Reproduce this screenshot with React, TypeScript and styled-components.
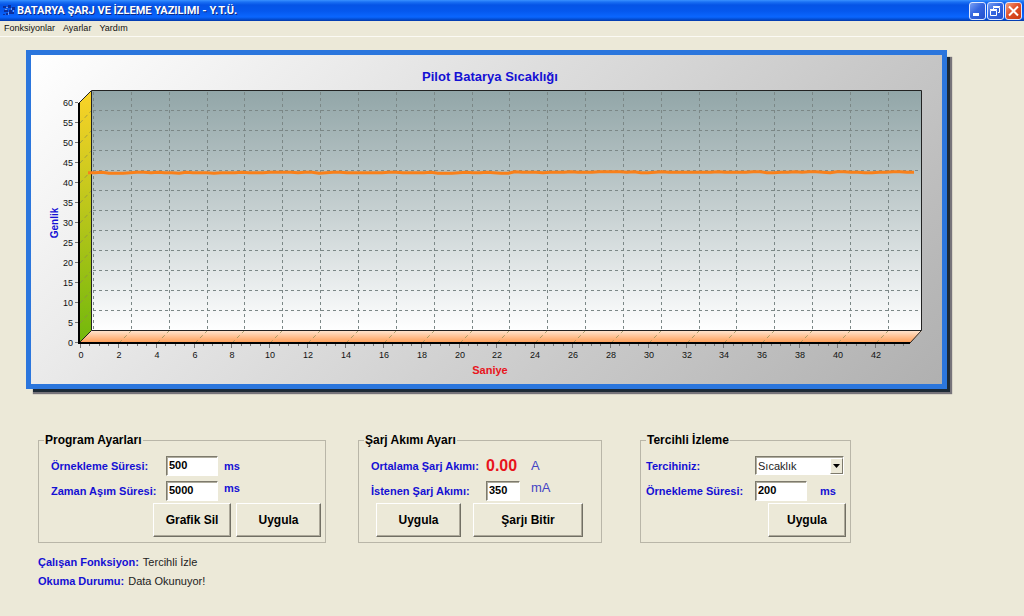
import React from "react";
import styled, { createGlobalStyle, css } from "styled-components";

const SANS = `"Liberation Sans", Arial, sans-serif`;
const FACE = "#ece9d8";
const BLUE = "#1410d4";

const GlobalStyle = createGlobalStyle`
  * { box-sizing: border-box; }
  body {
    margin: 0;
    background: ${FACE};
    color: #000;
    font-family: ${SANS};
    font-size: 11px;
  }
`;

const TitleBar = styled.header`
  display: flex;
  align-items: center;
  height: 21px;
  padding: 0 2px;
  background: linear-gradient(#3a92ff 0, #1a70f4 2px, #0554e6 5px, #0558ee 11px, #0a66ff 17px, #0450d8 19px, #0338a8 21px);
`;

const TitleText = styled.h1`
  flex: 1;
  margin: 0 0 0 1px;
  color: #fff;
  font: 700 11px/20px Roboto, sans-serif;
  text-shadow: 1px 1px 0 #0a2a86;
  white-space: nowrap;
`;

const WindowButtons = styled.div`
  display: flex;
  gap: 1px;
`;

const WindowButton = styled.button<{ $close?: boolean }>`
  display: grid;
  place-items: center;
  width: 17px;
  height: 18px;
  padding: 0;
  border: 1px solid #dfe8ff;
  border-radius: 3px;
  background: ${(p) =>
    p.$close
      ? "linear-gradient(135deg, #f0a080, #e0502a 45%, #c8380f)"
      : "linear-gradient(135deg, #7aa0f4, #3566e0 45%, #2450cc)"};
`;

const MenuBar = styled.nav`
  display: flex;
  gap: 8px;
  height: 16px;
  padding: 0 4px;
  border-bottom: 1px solid #fbfaf4;
`;

const MenuLink = styled.a`
  color: #111;
  font: 9px/15px ${SANS};
  text-decoration: none;
`;

const ChartPanel = styled.section`
  margin: 13px 77px 0 26px;
  border: 5px solid #2b76dd;
  background: linear-gradient(135deg, #fff, #b0b0b0);
  box-shadow: 5px 5px 0 -2px #1d2a36, 6px 6px 1px -1px #77747a;
`;

const ChartSvg = styled.svg`
  display: block;
  width: 100%;
  height: auto;
  font-family: ${SANS};
`;

const Groups = styled.div`
  display: grid;
  grid-template-columns: 288fr 250fr 211fr;
  column-gap: 32px;
  margin: 44px 173px 0 38px;
`;

const Group = styled.fieldset<{ $indent: number; $end: number; $after?: number }>`
  min-width: 0;
  margin: 0 ${(p) => p.$after ?? 0}px 0 0;
  padding: 6px ${(p) => p.$end}px 5px ${(p) => p.$indent}px;
  border: 1px solid #b9b6a8;
`;

const Legend = styled.legend<{ $indent: number }>`
  margin-left: ${(p) => 5 - p.$indent}px;
  padding: 0 1px;
  font-size: 12px;
  font-weight: 700;
  line-height: 14px;
`;

const Fields = styled.div<{ $columns: string }>`
  display: grid;
  grid-template-columns: ${(p) => p.$columns};
  grid-auto-rows: 25px;
  align-items: center;
  white-space: nowrap;
`;

const blueBold = css`
  color: ${BLUE};
  font-size: 11px;
  font-weight: 700;
`;

const Label = styled.label`
  ${blueBold}
`;

const Unit = styled.span<{ $raised?: boolean }>`
  ${blueBold}
  line-height: 20px;
  align-self: ${(p) => (p.$raised ? "start" : "center")};
`;

const LightUnit = styled(Unit)`
  color: #4444c4;
  font-size: 13px;
  font-weight: 400;
`;

const sunken = css`
  border: 1px solid;
  border-color: #7d7a6c #fff #fff #7d7a6c;
  background: #fff;
  box-shadow: inset 1px 1px 0 #b0ad9f;
`;

const TextBox = styled.input<{ $width: number }>`
  ${sunken}
  width: ${(p) => p.$width}px;
  height: 20px;
  padding: 0 2px 2px;
  color: #000;
  font: 700 11px ${SANS};
`;

const Reading = styled.output`
  color: #e8141c;
  font-size: 16px;
  font-weight: 700;
`;

const SelectBox = styled.div`
  ${sunken}
  position: relative;
  grid-column: 2 / 4;
  width: 89px;
  height: 19px;
`;

const Select = styled.select`
  display: block;
  width: 100%;
  height: 100%;
  padding: 0 2px;
  border: 0;
  appearance: none;
  background: transparent;
  color: #222;
  font: 11px ${SANS};
`;

const SelectArrow = styled.span`
  position: absolute;
  top: 1px;
  right: 0;
  bottom: 0;
  display: grid;
  place-items: center;
  width: 13px;
  border: 1px solid;
  border-color: #fff #7d7a6c #7d7a6c #fff;
  background: ${FACE};
  pointer-events: none;
`;

const Actions = styled.div<{ $gap: number }>`
  display: flex;
  justify-content: flex-end;
  gap: ${(p) => p.$gap}px;
`;

const PushButton = styled.button<{ $width: number }>`
  width: ${(p) => p.$width}px;
  height: 34px;
  padding: 0;
  border: 1px solid;
  border-color: #fff #716f64 #716f64 #fff;
  background: ${FACE};
  box-shadow: inset -1px -1px 0 #aca899;
  color: #000;
  font: 700 12px ${SANS};
`;

const Status = styled.dl`
  margin: 10px 38px 0;
`;

const StatusRow = styled.div`
  display: flex;
  gap: 4px;
  line-height: 19px;
`;

const StatusName = styled.dt`
  ${blueBold}
`;

const StatusValue = styled.dd`
  margin: 0;
  color: #222;
  font-size: 11px;
`;

const LEFT = 48;
const FLOOR = 288;
const TOP = 48;
const RIGHT = 879;
const DEPTH_X = 13;
const DEPTH_Y = 12;
const X0 = 50;
const X_STEP = 37.85;

const yTicks = Array.from({ length: 13 }, (_, i) => i * 5);
const xTicks = Array.from({ length: 22 }, (_, i) => i * 2);
const minorTicks = Array.from({ length: 88 }, (_, i) => i);
const yAt = (v: number) => FLOOR - v * 4;
const xAt = (v: number) => Math.round(X0 + (v / 2) * X_STEP);

const samples = [0, 0, 0, -1, 0, 1, 0, 0, -1, -1, -1, 0, 1, 0, -1, 0, 1, 0, -1, 0, 0, 1, 0, 0, -1, 0, -1, -1, 0, 0, 1, 0, -1, -1, 0];
const trace = Array.from({ length: 119 }, (_, i) => {
  const drift = i > 60 ? -0.6 : 0;
  const noise = samples[(i * 3 + (i % 4)) % samples.length] * 0.5;
  return `${57 + i * 7},${(117.8 + drift + noise).toFixed(1)}`;
}).join(" ");

function Chart() {
  return (
    <ChartSvg viewBox="0 0 911 329" role="img" aria-label="Pilot Batarya Sıcaklığı">
      <defs>
        <linearGradient id="back" x1="0" y1="0" x2="0" y2="1">
          <stop offset="0" stopColor="#92a6a8" />
          <stop offset="0.5" stopColor="#c6d0d1" />
          <stop offset="1" stopColor="#ffffff" />
        </linearGradient>
        <linearGradient id="wall" x1="0" y1="0" x2="0" y2="1">
          <stop offset="0" stopColor="#fbd328" />
          <stop offset="1" stopColor="#72b80c" />
        </linearGradient>
        <linearGradient id="floor" x1="0" y1="0" x2="0" y2="1">
          <stop offset="0" stopColor="#ffe3cc" />
          <stop offset="1" stopColor="#ff9a50" />
        </linearGradient>
      </defs>

      <text x="459" y="26" textAnchor="middle" fontSize="13" fontWeight="700" fill={BLUE}>
        Pilot Batarya Sıcaklığı
      </text>

      <rect x={LEFT + DEPTH_X - 1} y={TOP - DEPTH_Y} width={RIGHT - LEFT} height={FLOOR - TOP} fill="url(#back)" />
      <polygon points="48,48 60,36 60,276 48,288" fill="url(#wall)" />
      <polygon points="48,288 60,276 891,276 879,288" fill="url(#floor)" />

      <g stroke="#7b8786" strokeDasharray="3 3" shapeRendering="crispEdges">
        {yTicks.slice(1, -1).map((v) => (
          <line key={v} x1="62" x2="890" y1={yAt(v) - DEPTH_Y - 0.5} y2={yAt(v) - DEPTH_Y - 0.5} />
        ))}
        {xTicks.map((v) => (
          <line key={v} x1={xAt(v) + 12.5} x2={xAt(v) + 12.5} y1="37" y2="276" />
        ))}
      </g>
      <g stroke="#8c8a50" strokeOpacity="0.7" strokeDasharray="4 3">
        {yTicks.slice(1, -1).map((v) => (
          <line key={v} x1="49" y1={yAt(v)} x2="60" y2={yAt(v) - DEPTH_Y} />
        ))}
        {xTicks.slice(1).map((v) => (
          <line key={v} x1={xAt(v)} y1={FLOOR} x2={xAt(v) + 12} y2={FLOOR - DEPTH_Y} />
        ))}
      </g>

      <g fill="none" stroke="#222">
        <path d="M60.500 36V275.500H890.500V35.500H60.500L48 48M60.500 275.500L48 288M890.500 275.500L879 288" />
        <path d="M48 48V288H879" strokeWidth="2" stroke="#000" />
      </g>

      <g stroke="#777" shapeRendering="crispEdges">
        {yTicks.map((v) => (
          <line key={v} x1="44" x2="47" y1={yAt(v) - 0.5} y2={yAt(v) - 0.5} />
        ))}
        {minorTicks.map((i) => {
          const x = Math.round(X0 + (i * X_STEP) / 4) - 0.5;
          return <line key={i} x1={x} x2={x} y1="289" y2={i % 4 ? 291 : 293} />;
        })}
      </g>

      <polyline points={trace} fill="none" stroke="#f9801a" strokeWidth="3" strokeLinejoin="round" />

      <g fontSize="9" fill="#111">
        {yTicks.map((v) => (
          <text key={v} x="42" y={yAt(v) + 3} textAnchor="end">
            {v}
          </text>
        ))}
        {xTicks.map((v) => (
          <text key={v} x={xAt(v)} y="303" textAnchor="middle">
            {v}
          </text>
        ))}
      </g>

      <text x="459" y="319" textAnchor="middle" fontSize="11" fontWeight="700" fill="#e8141c">
        Saniye
      </text>
      <text transform="translate(27 168) rotate(-90)" textAnchor="middle" fontSize="10" fontWeight="700" fill={BLUE}>
        Genlik
      </text>
    </ChartSvg>
  );
}

function AppIcon() {
  return (
    <svg width="14" height="14" viewBox="0 0 14 14" aria-hidden="true">
      <path d="M1 2h3v2H1zM6 1h3v3H6zM10 3h3v3h-3zM2 6h4v2H2zM7 6h3v4H7zM1 10h2v1H1zM4 9h2v2H4zM10 8h2v2h-2z" fill="#0b2f9c" />
      <path d="M4 3h2v1H4zM9 4h1v2H9zM6 8h1v3H6zM3 5h2v1H3zM11 6h1v2h-1z" fill="#6f9af0" />
    </svg>
  );
}

export default function App() {
  return (
    <>
      <GlobalStyle />
      <TitleBar>
        <AppIcon />
        <TitleText>BATARYA ŞARJ VE İZLEME YAZILIMI - Y.T.Ü.</TitleText>
        <WindowButtons>
          <WindowButton aria-label="Simge durumuna küçült">
            <svg width="13" height="14" viewBox="0 0 13 14">
              <path d="M2 9h6v3H2z" fill="#fff" />
            </svg>
          </WindowButton>
          <WindowButton aria-label="Önceki boyut">
            <svg width="13" height="14" viewBox="0 0 13 14" fill="none" stroke="#fff">
              <path d="M4.500 5V3.500H10.500V8.500H9M4 2.500H11" />
              <path d="M1.500 6.500H7.500V11.500H1.500ZM1 5.500H8" />
            </svg>
          </WindowButton>
          <WindowButton $close aria-label="Kapat">
            <svg width="13" height="14" viewBox="0 0 13 14" stroke="#fff" strokeWidth="2">
              <path d="M2 2.500L11 11.500M11 2.500L2 11.500" />
            </svg>
          </WindowButton>
        </WindowButtons>
      </TitleBar>

      <MenuBar>
        <MenuLink href="#fonksiyonlar">Fonksiyonlar</MenuLink>
        <MenuLink href="#ayarlar">Ayarlar</MenuLink>
        <MenuLink href="#yardim">Yardım</MenuLink>
      </MenuBar>

      <main>
        <ChartPanel>
          <Chart />
        </ChartPanel>

        <Groups>
          <Group $indent={12} $end={4}>
            <Legend $indent={12}>Program Ayarları</Legend>
            <Fields $columns="115px 58px auto">
              <Label htmlFor="sample">Örnekleme Süresi:</Label>
              <TextBox id="sample" $width={52} defaultValue="500" />
              <Unit>ms</Unit>
              <Label htmlFor="timeout">Zaman Aşım Süresi:</Label>
              <TextBox id="timeout" $width={52} defaultValue="5000" />
              <Unit $raised>ms</Unit>
            </Fields>
            <Actions $gap={5}>
              <PushButton $width={78}>Grafik Sil</PushButton>
              <PushButton $width={85}>Uygula</PushButton>
            </Actions>
          </Group>

          <Group $indent={12} $end={18} $after={6}>
            <Legend $indent={12}>Şarj Akımı Ayarı</Legend>
            <Fields $columns="115px 45px auto">
              <Label htmlFor="average">Ortalama Şarj Akımı:</Label>
              <Reading id="average">0.00</Reading>
              <LightUnit>A</LightUnit>
              <Label htmlFor="target">İstenen Şarj Akımı:</Label>
              <TextBox id="target" $width={34} defaultValue="350" />
              <LightUnit $raised>mA</LightUnit>
            </Fields>
            <Actions $gap={12}>
              <PushButton $width={85}>Uygula</PushButton>
              <PushButton $width={110}>Şarjı Bitir</PushButton>
            </Actions>
          </Group>

          <Group $indent={5} $end={4}>
            <Legend $indent={5}>Tercihli İzleme</Legend>
            <Fields $columns="109px 65px auto">
              <Label htmlFor="choice">Tercihiniz:</Label>
              <SelectBox>
                <Select id="choice" defaultValue="Sıcaklık">
                  <option>Sıcaklık</option>
                </Select>
                <SelectArrow>
                  <svg width="7" height="4" viewBox="0 0 7 4" aria-hidden="true">
                    <path d="M0 0H7L3.500 4Z" />
                  </svg>
                </SelectArrow>
              </SelectBox>
              <Label htmlFor="watch">Örnekleme Süresi:</Label>
              <TextBox id="watch" $width={52} defaultValue="200" />
              <Unit>ms</Unit>
            </Fields>
            <Actions $gap={5}>
              <PushButton $width={78}>Uygula</PushButton>
            </Actions>
          </Group>
        </Groups>

        <Status>
          <StatusRow>
            <StatusName>Çalışan Fonksiyon:</StatusName>
            <StatusValue>Tercihli İzle</StatusValue>
          </StatusRow>
          <StatusRow>
            <StatusName>Okuma Durumu:</StatusName>
            <StatusValue>Data Okunuyor!</StatusValue>
          </StatusRow>
        </Status>
      </main>
    </>
  );
}
